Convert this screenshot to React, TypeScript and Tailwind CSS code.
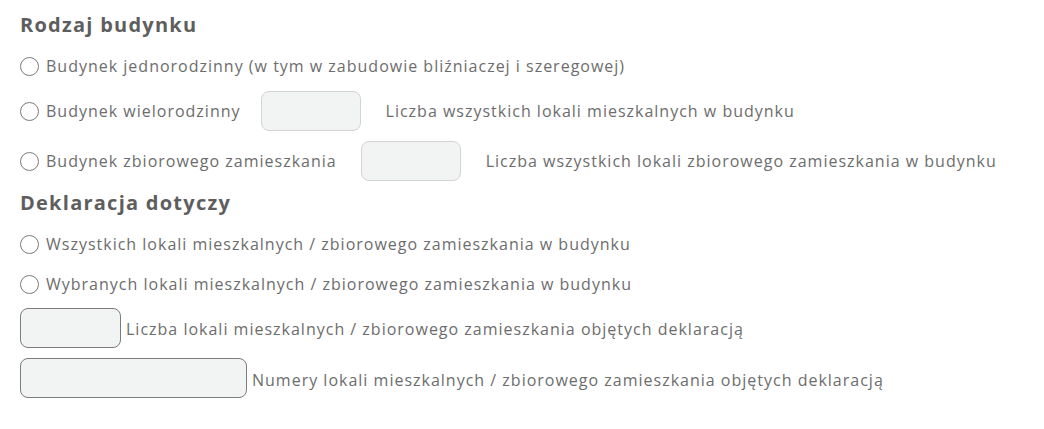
import React from "react";

// radio z etykietą
function Radio({ label }: { label: string }) {
  return (
    <label className="flex items-center">
      <span className="w-[19px] h-[19px] rounded-full border-[1.5px] border-[#7a7a7a] bg-white shrink-0" />
      <span className="ml-[7px]">{label}</span>
    </label>
  );
}

function Box({ w, dark }: { w: string; dark?: boolean }) {
  return (
    <div
      className={
        dark
          ? `${w} h-[40px] rounded-[8px] border border-[#7c7c7c] bg-[#f2f3f3]`
          : `${w} h-[40px] rounded-[8px] border border-[#d3d3d3] bg-[#f2f3f3]`
      }
    />
  );
}

export default function App() {
  return (
    <div
      className="w-[1044px] h-[429px] bg-white px-5 pt-[12px] text-[16px] text-[#6d6d6d] tracking-[1px]"
      style={{ fontFamily: "'Open Sans', 'Noto Sans', sans-serif" }}
    >
      {/* Rodzaj budynku */}
      <h2 className="text-[20px] font-bold text-[#5e5e5e] leading-[26px] tracking-[1.25px]">Rodzaj budynku</h2>
      <div className="mt-[16px] h-[24px] flex items-center">
        <Radio label="Budynek jednorodzinny (w tym w zabudowie bliźniaczej i szeregowej)" />
      </div>
      <div className="mt-[13px] flex items-center">
        <Radio label="Budynek wielorodzinny" />
        <div className="ml-[20px] mr-[25px]">
          <Box w="w-[100px]" />
        </div>
        <span>Liczba wszystkich lokali mieszkalnych w budynku</span>
      </div>
      <div className="mt-[10px] flex items-center">
        <Radio label="Budynek zbiorowego zamieszkania" />
        <div className="ml-[24px] mr-[25px]">
          <Box w="w-[100px]" />
        </div>
        <span>Liczba wszystkich lokali zbiorowego zamieszkania w budynku</span>
      </div>

      {/* Deklaracja dotyczy */}
      <h2 className="mt-[9px] text-[20px] font-bold text-[#5e5e5e] leading-[26px] tracking-[1.25px]">Deklaracja dotyczy</h2>
      <div className="mt-[16px] h-[24px] flex items-center">
        <Radio label="Wszystkich lokali mieszkalnych / zbiorowego zamieszkania w budynku" />
      </div>
      <div className="mt-[16px] h-[24px] flex items-center">
        <Radio label="Wybranych lokali mieszkalnych / zbiorowego zamieszkania w budynku" />
      </div>
      <div className="mt-[12px] flex items-center">
        <Box w="w-[101px]" dark />
        <span className="ml-[5px] mt-[2px]">Liczba lokali mieszkalnych / zbiorowego zamieszkania objętych deklaracją</span>
      </div>
      <div className="mt-[10px] flex items-center">
        <Box w="w-[227px]" dark />
        <span className="ml-[5px] mt-[4px]">Numery lokali mieszkalnych / zbiorowego zamieszkania objętych deklaracją</span>
      </div>
    </div>
  );
}
